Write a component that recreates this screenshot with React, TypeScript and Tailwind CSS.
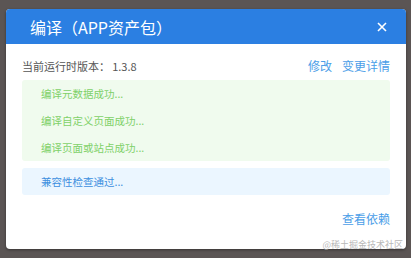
const App: React.FC = () => {
  const steps = ["编译元数据成功...", "编译自定义页面成功...", "编译页面或站点成功..."];
  return (
    <div
      className="relative w-[411px] h-[258px] bg-[#5b5554] pt-[9px] pl-[6px] overflow-hidden"
      style={{ fontFamily: '"Noto Sans CJK SC", "Liberation Sans", sans-serif' }}
    >
      <div className="w-[400px] h-[240px] bg-white rounded-[4px] overflow-hidden shadow-[0_1px_3px_rgba(0,0,0,0.4)]">
        <div className="h-[35px] bg-[#2b7fe2] flex items-center justify-between pl-[24px] pr-[18px]">
          <span className="text-white text-[16px] leading-none">编译（APP资产包）</span>
          <svg width="10" height="10" viewBox="0 0 10 10" className="mr-[1px]">
            <path d="M1 1 L9 9 M9 1 L1 9" stroke="white" strokeWidth="1.6" />
          </svg>
        </div>
        <div className="px-[16px]">
          <div className="flex items-center justify-between h-[16px] mt-[14px]">
            <span className="text-[11px] text-[#555]">当前运行时版本：&thinsp;1.3.8</span>
            <div className="flex gap-[10px] text-[12px] text-[#4b9ee8]">
              <span>修改</span>
              <span>变更详情</span>
            </div>
          </div>
          <div className="mt-[6px] bg-[#f0fbee] rounded-[3px]">
            {steps.map((s) => (
              <div key={s} className="h-[27px] flex items-center pl-[19px] text-[10.5px] text-[#7fd169]">
                {s}
              </div>
            ))}
          </div>
          <div className="mt-[7px] h-[27px] bg-[#ebf6ff] rounded-[3px] flex items-center pl-[19px] text-[10.5px] text-[#3d8fe0]">
            兼容性检查通过...
          </div>
          <div className="flex justify-end mt-[15px]">
            <span className="text-[12px] text-[#4b9ee8]">查看依赖</span>
          </div>
        </div>
      </div>
      <span className="absolute right-[8px] top-[239px] text-[9px] leading-[12px] text-[#b8b8b8]">@稀土掘金技术社区</span>
    </div>
  );
};

export default App;
